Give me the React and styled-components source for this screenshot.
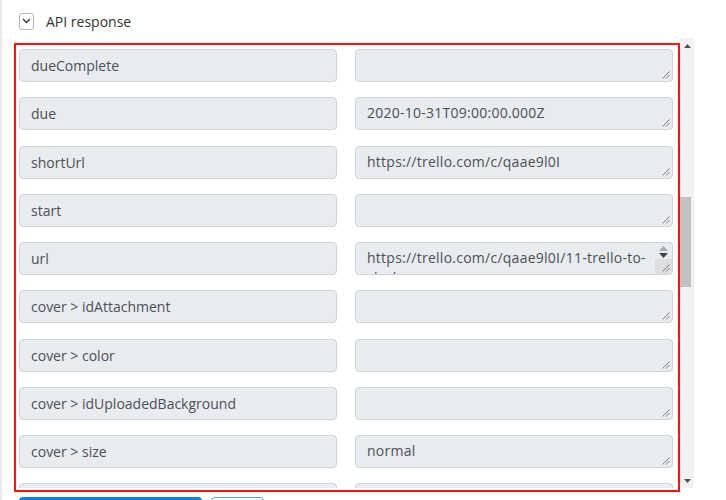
import React from "react";
import styled, { createGlobalStyle } from "styled-components";

const GlobalStyle = createGlobalStyle`
  html, body { margin: 0; padding: 0; background: #ffffff; }
  body { font-family: "Open Sans", "Noto Sans", sans-serif; overflow: hidden; }
  * { box-sizing: border-box; }
`;

const Page = styled.div`
  width: 726px;
  height: 500px;
  overflow: hidden;
  padding-left: 1px;
`;

const Panel = styled.div`
  width: 694px;
  height: 500px;
  border-left: 2px solid #e9ecef;
  margin-left: -1px;
`;

const Header = styled.div`
  height: 38px;
  display: flex;
  align-items: center;
  gap: 12px;
  padding: 4px 0 0 17px;
`;

const Toggle = styled.span`
  width: 15px;
  height: 17px;
  border: 1px solid #b5b5b5;
  border-radius: 3px;
  display: flex;
  align-items: center;
  justify-content: center;
  background: #fff;
`;

const HeaderLabel = styled.span`
  font-size: 14px;
  color: #333;
`;

const Section = styled.div`
  position: relative;
  height: 450px;
  display: flex;
`;

const Viewport = styled.div`
  flex: 1;
  overflow: hidden;
  padding: 11px 0 0 17px;
`;

const Grid = styled.div`
  display: grid;
  grid-template-columns: 318px 318px;
  column-gap: 18px;
  row-gap: 15.25px;
  grid-auto-rows: 33px;
`;

const Field = styled.div`
  position: relative;
  background: #e9ecef;
  border: 1px solid #ced4da;
  border-radius: 4px;
  padding: ${(p) => (p.$area ? "5px 11px 0 11px" : "0 11px")};
  display: flex;
  align-items: ${(p) => (p.$area ? "flex-start" : "center")};
  font-size: 14px;
  line-height: ${(p) => (p.$area ? "20px" : "21px")};
  color: #495057;
  overflow: hidden;
  white-space: nowrap;
`;

const AreaText = styled.div`
  white-space: pre;
  letter-spacing: 0.25px;
`;

const Grip = styled.svg`
  position: absolute;
  right: 2px;
  bottom: 2px;
`;

const InnerBar = styled.div`
  position: absolute;
  top: 0;
  right: 0;
  bottom: 0;
  width: 17px;
  display: flex;
  flex-direction: column;
`;

const InnerArrows = styled.div`
  height: 16px;
  display: flex;
  flex-direction: column;
  align-items: center;
  justify-content: center;
  gap: 2px;
  padding-top: 2px;
`;

const InnerRest = styled.div`
  flex: 1;
  background: #dcdee0;
`;

const Scrollbar = styled.div`
  width: 14px;
  background: #f1f1f1;
  display: flex;
  flex-direction: column;
`;

const ScrollButton = styled.div`
  height: 15px;
  display: flex;
  align-items: center;
  justify-content: center;
`;

const Track = styled.div`
  flex: 1;
`;

const Thumb = styled.div`
  width: 11px;
  height: ${(p) => p.$h}px;
  margin-top: ${(p) => p.$top}px;
  background: #c1c1c1;
`;

const Highlight = styled.div`
  position: absolute;
  left: 12px;
  top: 5px;
  width: 666px;
  height: 449px;
  border: 2px solid #ff1010;
  pointer-events: none;
`;

const Buttons = styled.div`
  display: flex;
  gap: 9px;
  padding: 9px 0 0 17px;
`;

const PrimaryButton = styled.div`
  width: 183px;
  height: 32px;
  background: #0d7ff2;
  border-radius: 4px;
`;

const OutlineButton = styled.div`
  width: 53px;
  height: 32px;
  border: 1px solid #5a9fe8;
  border-radius: 4px;
  background: #fff;
`;

const ResizeGrip = () => (
  <Grip width="8" height="8" viewBox="0 0 8 8">
    <line x1="7.5" y1="0.5" x2="0.5" y2="7.5" stroke="#6f6f6f" strokeWidth="0.9" />
    <line x1="7.5" y1="4" x2="4" y2="7.5" stroke="#6f6f6f" strokeWidth="0.9" />
  </Grip>
);

const Tri = ({ up, color = "#505050", w = 7, h = 4 }) => (
  <svg width={w} height={h} viewBox={`0 0 ${w} ${h}`}>
    <polygon
      points={up ? `0,${h} ${w},${h} ${w / 2},0` : `0,0 ${w},0 ${w / 2},${h}`}
      fill={color}
    />
  </svg>
);

const rows = [
  ["dueComplete", ""],
  ["due", "2020-10-31T09:00:00.000Z"],
  ["shortUrl", "https://trello.com/c/qaae9l0I"],
  ["start", ""],
  ["url", "https://trello.com/c/qaae9l0I/11-trello-to-\nslack", true],
  ["cover > idAttachment", ""],
  ["cover > color", ""],
  ["cover > idUploadedBackground", ""],
  ["cover > size", "normal"],
  ["", ""],
];

export default function App() {
  return (
    <Page>
      <GlobalStyle />
      <Panel>
        <Header>
          <Toggle>
            <svg width="9" height="6" viewBox="0 0 9 6">
              <polyline points="1,1 4.5,4.5 8,1" fill="none" stroke="#333" strokeWidth="1.3" />
            </svg>
          </Toggle>
          <HeaderLabel>API response</HeaderLabel>
        </Header>
        <Section>
          <Viewport>
            <Grid>
              {rows.map(([k, v, scroll], i) => (
                <React.Fragment key={i}>
                  <Field>{k}</Field>
                  <Field $area>
                    <AreaText>{v}</AreaText>
                    {scroll && (
                      <InnerBar>
                        <InnerArrows>
                          <Tri up color="#a8a8a8" w={9} h={5} />
                          <Tri color="#404040" w={9} h={5} />
                        </InnerArrows>
                        <InnerRest />
                      </InnerBar>
                    )}
                    <ResizeGrip />
                  </Field>
                </React.Fragment>
              ))}
            </Grid>
          </Viewport>
          <Scrollbar>
            <ScrollButton>
              <Tri up />
            </ScrollButton>
            <Track>
              <Thumb $top={144} $h={90} />
            </Track>
            <ScrollButton>
              <Tri />
            </ScrollButton>
          </Scrollbar>
          <Highlight />
        </Section>
        <Buttons>
          <PrimaryButton />
          <OutlineButton />
        </Buttons>
      </Panel>
    </Page>
  );
}
